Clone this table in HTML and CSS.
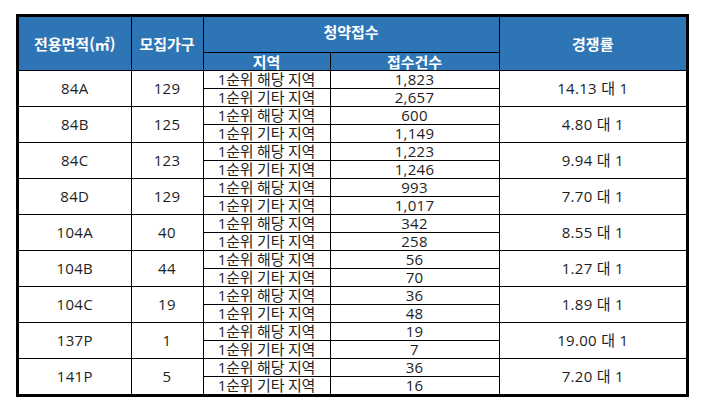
FILE: index.html
```html
<!DOCTYPE html>
<html lang="ko">
<head>
<meta charset="utf-8">
<link rel="stylesheet" href="styles.css">
</head>
<body>
<div class="frame">
<table class="grid">
<colgroup>
<col class="c1"><col class="c2"><col class="c3"><col class="c4"><col class="c5">
</colgroup>
<thead>
<tr class="h1">
<th rowspan="2">전용면적(㎡)</th>
<th rowspan="2">모집가구</th>
<th colspan="2" class="top">청약접수</th>
<th rowspan="2">경쟁률</th>
</tr>
<tr class="h2">
<th>지역</th>
<th>접수건수</th>
</tr>
</thead>
<tbody>
<tr><td rowspan="2">84A</td><td rowspan="2">129</td><td class="reg">1순위 해당 지역</td><td>1,823</td><td rowspan="2">14.13 대 1</td></tr>
<tr><td class="reg">1순위 기타 지역</td><td>2,657</td></tr>
<tr><td rowspan="2">84B</td><td rowspan="2">125</td><td class="reg">1순위 해당 지역</td><td>600</td><td rowspan="2">4.80 대 1</td></tr>
<tr><td class="reg">1순위 기타 지역</td><td>1,149</td></tr>
<tr><td rowspan="2">84C</td><td rowspan="2">123</td><td class="reg">1순위 해당 지역</td><td>1,223</td><td rowspan="2">9.94 대 1</td></tr>
<tr><td class="reg">1순위 기타 지역</td><td>1,246</td></tr>
<tr><td rowspan="2">84D</td><td rowspan="2">129</td><td class="reg">1순위 해당 지역</td><td>993</td><td rowspan="2">7.70 대 1</td></tr>
<tr><td class="reg">1순위 기타 지역</td><td>1,017</td></tr>
<tr><td rowspan="2">104A</td><td rowspan="2">40</td><td class="reg">1순위 해당 지역</td><td>342</td><td rowspan="2">8.55 대 1</td></tr>
<tr><td class="reg">1순위 기타 지역</td><td>258</td></tr>
<tr><td rowspan="2">104B</td><td rowspan="2">44</td><td class="reg">1순위 해당 지역</td><td>56</td><td rowspan="2">1.27 대 1</td></tr>
<tr><td class="reg">1순위 기타 지역</td><td>70</td></tr>
<tr><td rowspan="2">104C</td><td rowspan="2">19</td><td class="reg">1순위 해당 지역</td><td>36</td><td rowspan="2">1.89 대 1</td></tr>
<tr><td class="reg">1순위 기타 지역</td><td>48</td></tr>
<tr><td rowspan="2">137P</td><td rowspan="2">1</td><td class="reg">1순위 해당 지역</td><td>19</td><td rowspan="2">19.00 대 1</td></tr>
<tr><td class="reg">1순위 기타 지역</td><td>7</td></tr>
<tr><td rowspan="2">141P</td><td rowspan="2">5</td><td class="reg">1순위 해당 지역</td><td>36</td><td rowspan="2">7.20 대 1</td></tr>
<tr><td class="reg">1순위 기타 지역</td><td>16</td></tr>
</tbody>
</table>
</div>
</body>
</html>
```
FILE: styles.css
```css
html, body {
  margin: 0;
  padding: 0;
  background: #fff;
}
body {
  padding: 14px 0 0 16px;
  font-family: "Noto Sans CJK KR", "Noto Sans", sans-serif;
}
.frame {
  width: 667px;
  border: 3px solid #000;
}
.grid {
  width: 667px;
  border-collapse: collapse;
  border-style: hidden;
  table-layout: fixed;
}
.c1 { width: 112px; }
.c2 { width: 72px; }
.c3 { width: 127px; }
.c4 { width: 169px; }
.c5 { width: 187px; }
.grid th,
.grid td {
  border: 1px solid #000;
  padding: 0;
  text-align: center;
  vertical-align: middle;
  overflow: hidden;
  white-space: nowrap;
}
.grid th {
  background: #2e75b6;
  color: #fff;
  font-weight: 700;
  font-size: 15px;
  line-height: 17px;
}
.h1 { height: 35px; }
.h1 th.top { vertical-align: top; padding-top: 6px; }
.h2 { height: 18px; }
.h2 th { font-size: 15px; line-height: 17px; }
.grid td {
  height: 17px;
  font-family: "Open Sans", "Noto Sans CJK KR", sans-serif;
  font-size: 15px;
  line-height: 17px;
  color: #1e1e1e;
  letter-spacing: 0.3px;
}
.grid tbody tr { height: 18px; }
.grid td.reg { letter-spacing: -0.2px; }
```
